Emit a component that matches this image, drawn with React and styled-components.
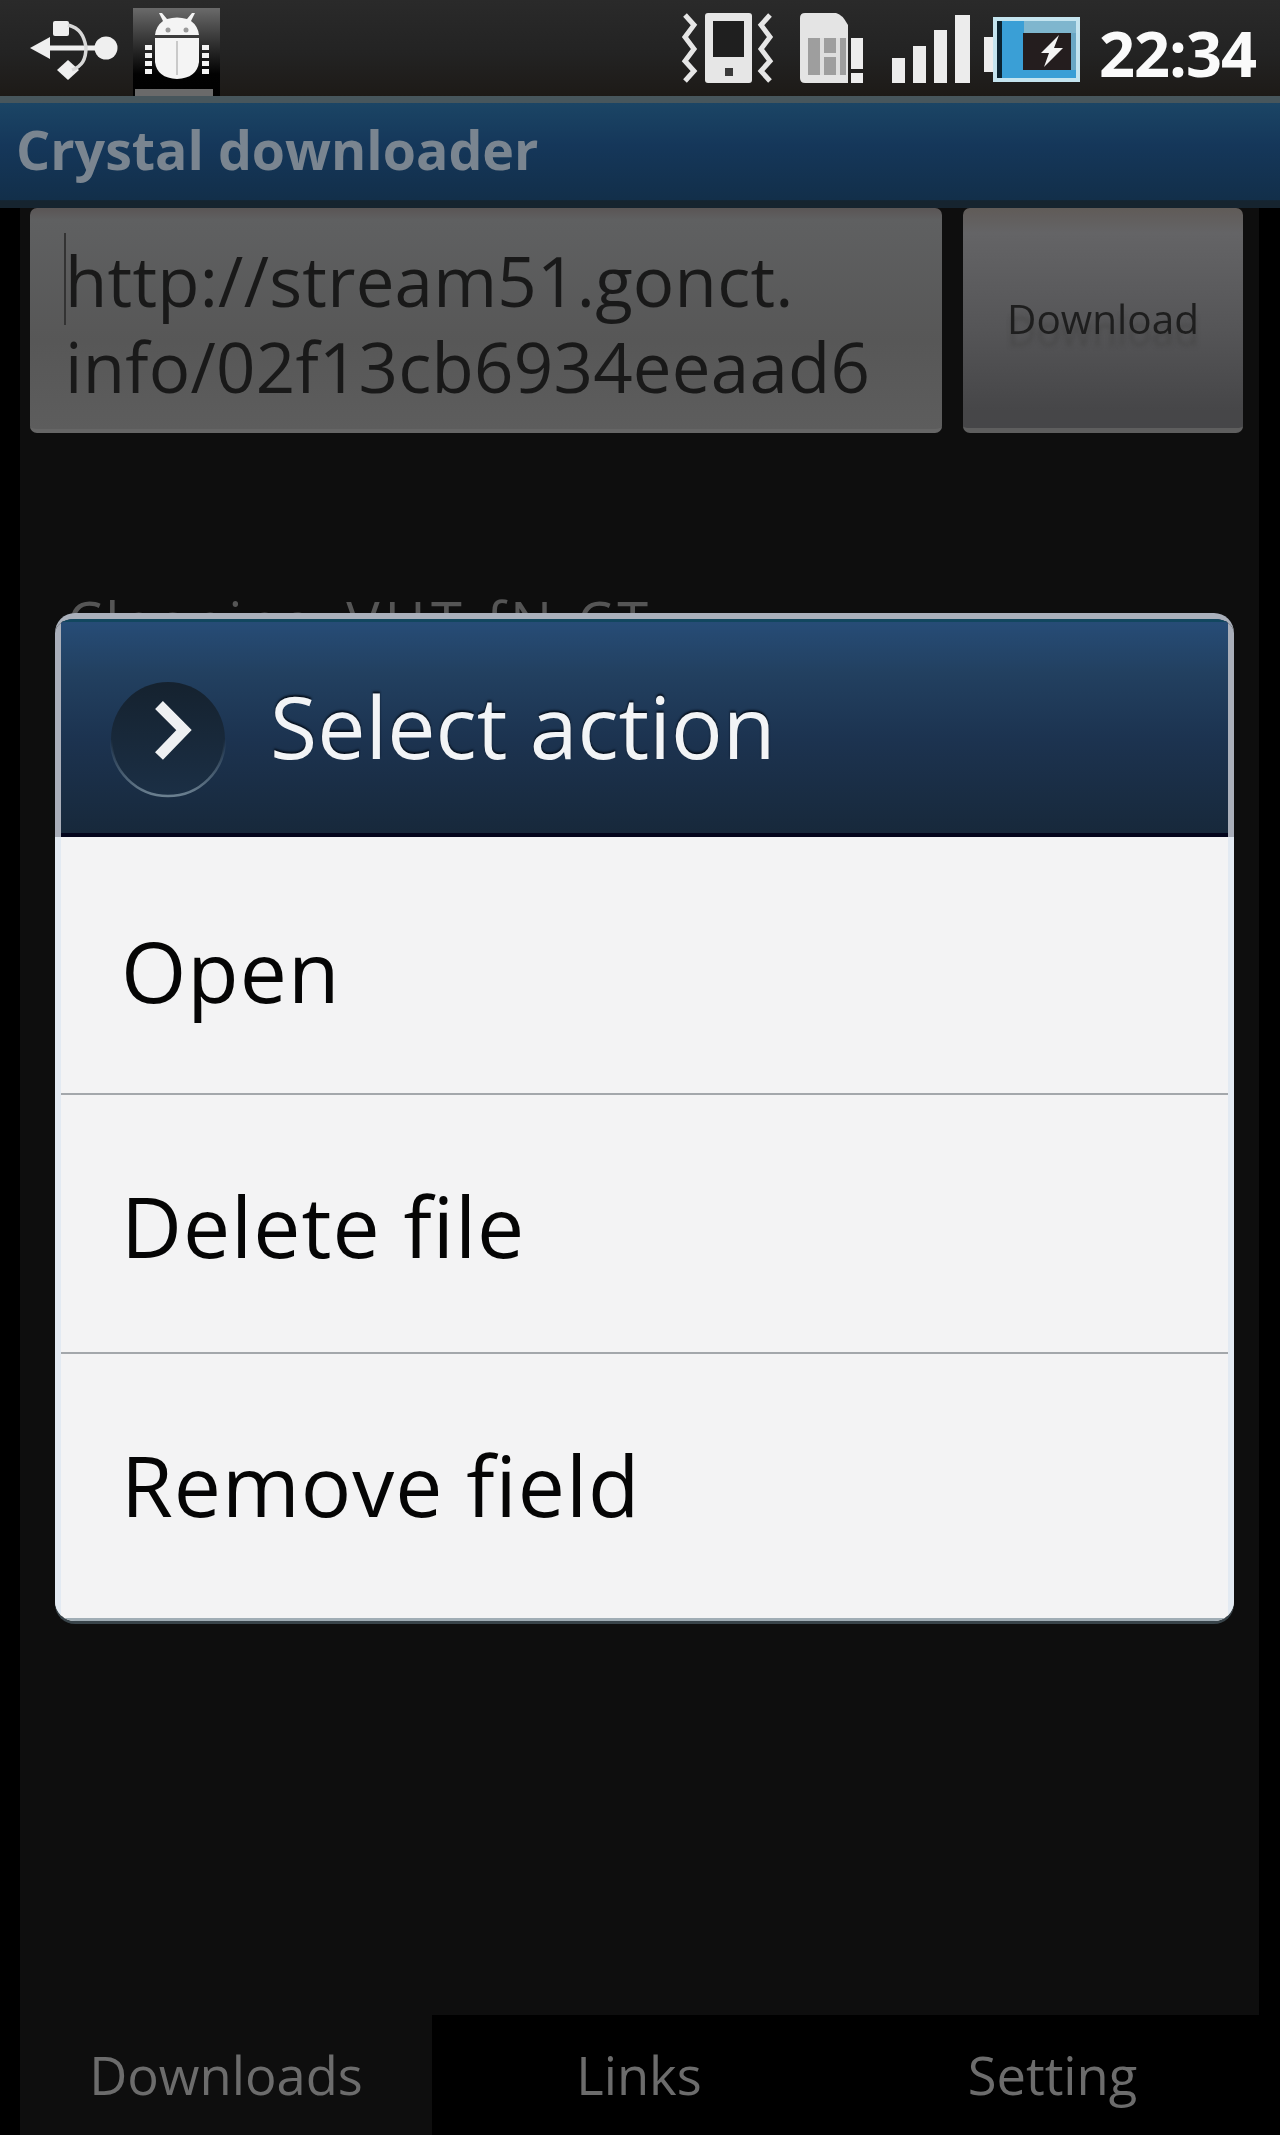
import React from "react";
import styled, { createGlobalStyle } from "styled-components";

const Global = createGlobalStyle`
  html, body { margin: 0; padding: 0; background: #000; }
  #root { width: 1280px; height: 2135px; overflow: hidden; }
`;

const Screen = styled.div`
  position: relative;
  width: 1280px;
  height: 2135px;
  display: flex;
  flex-direction: column;
  background: #000;
  overflow: hidden;
  font-family: "Open Sans", "Noto Sans", sans-serif;
  filter: blur(0.6px);
`;

const StatusBar = styled.div`
  height: 96px;
  flex: none;
  display: flex;
  align-items: flex-start;
  box-sizing: border-box;
  padding: 0 23px 0 30px;
  background: linear-gradient(#2a2a2a, #232323 55%, #1d1a17);
`;

const StatusLeft = styled.div`
  display: flex;
  align-items: flex-start;
`;

const StatusRight = styled.div`
  margin-left: auto;
  display: flex;
  align-items: flex-start;
`;

const Icon = styled.svg`
  display: block;
  flex: none;
  margin-left: ${(p) => p.$gap || 0}px;
  margin-top: ${(p) => p.$top || 0}px;
`;

const Clock = styled.div`
  margin: 11px 3px 0 19px;
  width: 155px;
  font-size: 63px;
  line-height: 84px;
  font-weight: 700;
  letter-spacing: -1px;
  color: #fafafa;
  white-space: nowrap;
`;

const TitleBar = styled.div`
  height: 112px;
  flex: none;
  box-sizing: border-box;
  padding: 0 0 12px 16px;
  display: flex;
  align-items: center;
  border-top: 7px solid #47565c;
  background: linear-gradient(#1b4565, #15375a 40%, #122f4a 92%, #16242f 93%);
  font-size: 53.7px;
  font-weight: 700;
  color: #7a8590;
`;

const Main = styled.div`
  flex: 1;
  margin: 0 21px 0 20px;
  padding: 0 16px 0 10px;
  display: flex;
  flex-direction: column;
  background: #0e0e0e;
`;

const FormRow = styled.div`
  display: flex;
  gap: 21px;
`;

const UrlField = styled.div`
  position: relative;
  width: 912px;
  height: 225px;
  flex: none;
  box-sizing: border-box;
  padding: 29px 0 0 35px;
  border-radius: 7px;
  background: linear-gradient(#5a5555 0, #5f6061 12px, #575757 60%, #5d5d5d);
  border-bottom: 4px solid #666;
  font-size: 69px;
  line-height: 86px;
  letter-spacing: 0.25px;
  color: #191919;
  white-space: nowrap;
`;

const Caret = styled.span`
  position: absolute;
  left: 34px;
  top: 25px;
  width: 2px;
  height: 92px;
  background: #333;
`;

const DownloadButton = styled.div`
  flex: 1;
  height: 225px;
  box-sizing: border-box;
  display: flex;
  align-items: center;
  justify-content: center;
  border-radius: 7px;
  border-bottom: 5px solid #5e5e5e;
  background: linear-gradient(#605b58 0, #646466 25px, #555557 55%, #464648 92%);
  font-size: 40.5px;
  color: #1e1e1e;
  text-shadow: 0 12px 4px rgba(70, 70, 70, 0.7);
`;

const GhostRow = styled.div`
  margin: 151px 0 0 37px;
  display: flex;
  gap: 30px;
  font-size: 56px;
  line-height: 74px;
  letter-spacing: 3px;
  color: #555;
`;

const GhostTail = styled.span`
  letter-spacing: 5px;
`;

const Tabs = styled.div`
  height: 120px;
  flex: none;
  display: grid;
  grid-template-columns: 412px 414px 413px;
  padding: 0 21px 0 20px;
`;

const Tab = styled.div`
  display: flex;
  align-items: flex-start;
  justify-content: center;
  padding-top: 24px;
  background: ${(p) => (p.$active ? "#0e0e0e" : "#000")};
  font-size: 52.5px;
  line-height: 72px;
  color: #6c6c6c;
`;

const Dialog = styled.div`
  position: absolute;
  left: 55px;
  top: 613px;
  width: 1179px;
  height: 1008px;
  box-sizing: border-box;
  display: flex;
  flex-direction: column;
  overflow: hidden;
  border-radius: 20px;
  border-top: 6px solid #aab0bb;
  box-shadow: 0 3px 0 #39444a;
`;

const DialogHeader = styled.div`
  height: 218px;
  flex: none;
  box-sizing: border-box;
  display: flex;
  align-items: center;
  gap: 42px;
  padding: 0 0 6px 47px;
  border: 0 solid #a9aeb9;
  border-width: 0 6px;
  background: linear-gradient(#03051c, #03051c) bottom / 100% 4px no-repeat,
    linear-gradient(#12475f, #12475f) top / 100% 3px no-repeat,
    linear-gradient(#274d78, #224060 25%, #1c3350 55%, #17283a);
  font-size: 86px;
  color: #f2f4f6;
  text-shadow: 0 -2px 2px #06101d;
`;

const DialogBody = styled.div`
  flex: 1;
  display: flex;
  flex-direction: column;
  border: 0 solid #e3eaf2;
  border-width: 0 6px;
  border-bottom: 5px solid #a0adb5;
  background: #f3f3f4;
`;

const DialogRow = styled.div`
  height: ${(p) => p.$height}px;
  flex: none;
  display: flex;
  align-items: center;
  box-sizing: border-box;
  padding: ${(p) => p.$top}px 0 4px 60px;
  font-size: 84px;
  letter-spacing: 1px;
  color: #050505;
  & + & {
    border-top: 2px solid #a3a7ab;
  }
`;

const Usb = () => (
  <Icon width="88" height="60" viewBox="0 0 88 60" $top={20}>
    <g fill="#efefef">
      <rect x="12" y="25.5" width="60" height="5" />
      <polygon points="0,28 20,17 20,39" />
      <circle cx="76" cy="28" r="11.5" />
      <rect x="23" y="1" width="16" height="15" rx="2" />
      <polygon points="38,40 49,50 38,60 27,50" />
    </g>
    <path d="M38 5 C50 8 54 16 56 27 C56 40 52 46 42 50" fill="none" stroke="#d8d8d8" strokeWidth="3.5" />
  </Icon>
);

const AndroidTile = () => (
  <Icon width="87" height="88" viewBox="0 0 87 88" $gap={15} $top={8}>
    <defs>
      <linearGradient id="tile" x1="0" y1="0" x2="0" y2="1">
        <stop offset="0" stopColor="#6a6a6a" />
        <stop offset="0.45" stopColor="#2a2a2a" />
        <stop offset="0.75" stopColor="#020202" />
        <stop offset="1" stopColor="#000" />
      </linearGradient>
    </defs>
    <rect width="87" height="88" fill="url(#tile)" />
    <rect x="2" y="81" width="78" height="7" fill="#6a6a6a" />
    <g fill="#f4f4f4">
      <path d="M30 13 L26 5 L29 5 L34 11 Q44 8 54 11 L59 5 L62 5 L58 13 Q65 18 66 27 L22 27 Q23 18 30 13 Z" />
      <path d="M22 30 L66 30 L66 54 Q64 70 44 71 Q24 70 22 54 Z" />
      <rect x="12" y="37" width="7" height="5" />
      <rect x="12" y="45" width="7" height="5" />
      <rect x="12" y="53" width="7" height="5" />
      <rect x="12" y="61" width="7" height="5" />
      <rect x="69" y="37" width="7" height="5" />
      <rect x="69" y="45" width="7" height="5" />
      <rect x="69" y="53" width="7" height="5" />
      <rect x="69" y="61" width="7" height="5" />
    </g>
    <circle cx="35" cy="22" r="2.5" fill="#9a9a9a" />
    <circle cx="53" cy="22" r="2.5" fill="#9a9a9a" />
    <rect x="43" y="33" width="2" height="34" fill="#c9c9c9" />
  </Icon>
);

const Vibrate = () => (
  <Icon width="95" height="70" viewBox="0 0 95 70" $top={13}>
    <rect x="25" y="0" width="47" height="70" rx="3" fill="#e6e6e6" />
    <rect x="33" y="8" width="31" height="36" fill="#1f1f1f" />
    <rect x="45" y="55" width="8" height="8" fill="#3a3a3a" />
    <g fill="none" stroke="#e6e6e6" strokeWidth="5">
      <polyline points="5,2 14,12 5,24 14,36 5,48 14,58 5,68" />
      <polyline points="90,2 81,12 90,24 81,36 90,48 81,58 90,68" />
    </g>
  </Icon>
);

const Sim = () => (
  <Icon width="63" height="70" viewBox="0 0 63 70" $gap={25} $top={13}>
    <path d="M5 0 L36 0 Q42 1 48 12 L48 70 L5 70 Q0 70 0 65 L0 5 Q0 0 5 0 Z" fill="#e4e4e4" />
    <rect x="8" y="25" width="38" height="37" fill="#9e9e9e" />
    <g fill="#dedede">
      <rect x="20" y="25" width="4" height="37" />
      <rect x="36" y="25" width="4" height="37" />
      <rect x="24" y="40" width="12" height="4" />
    </g>
    <rect x="51" y="25" width="12" height="31" fill="#ededed" />
    <rect x="51" y="60" width="12" height="10" fill="#ededed" />
  </Icon>
);

const Signal = () => (
  <Icon width="78" height="70" viewBox="0 0 78 70" $gap={29} $top={13}>
    <g fill="#ececec">
      <rect x="0" y="45" width="13" height="25" />
      <rect x="21" y="33" width="13" height="37" />
      <rect x="42" y="17" width="13" height="53" />
      <rect x="63" y="2" width="15" height="68" />
    </g>
  </Icon>
);

const Battery = () => (
  <Icon width="96" height="65" viewBox="0 0 96 65" $gap={14} $top={17}>
    <rect x="0" y="20" width="9" height="35" fill="#ececec" />
    <rect x="11" y="2" width="83" height="61" fill="#0b2330" stroke="#c4e4ef" strokeWidth="4" />
    <rect x="18" y="4" width="74" height="57" fill="#3a9fd6" />
    <rect x="40" y="4" width="52" height="12" fill="#7fb6ce" />
    <rect x="87" y="16" width="5" height="37" fill="#6aa7c4" />
    <rect x="39" y="16" width="48" height="37" fill="#241d1e" />
    <polygon points="75,18 57,36 65,36 60,50 79,31 70,31" fill="#f4f4f4" />
  </Icon>
);

const HeaderBadge = () => (
  <Icon width="120" height="120" viewBox="0 0 120 120" $top={28}>
    <defs>
      <linearGradient id="badge" x1="0" y1="0" x2="0" y2="1">
        <stop offset="0" stopColor="#15222f" />
        <stop offset="1" stopColor="#1b2f45" />
      </linearGradient>
      <linearGradient id="ring" x1="0" y1="0" x2="0" y2="1">
        <stop offset="0.5" stopColor="#5d7385" stopOpacity="0" />
        <stop offset="1" stopColor="#6b8090" />
      </linearGradient>
    </defs>
    <circle cx="60" cy="60" r="57" fill="url(#badge)" stroke="url(#ring)" strokeWidth="2.5" />
    <polyline points="51,26 76,51 51,77" fill="none" stroke="#eef0f2" strokeWidth="11" />
  </Icon>
);

export default function App() {
  return (
    <Screen>
      <Global />
      <StatusBar>
        <StatusLeft>
          <Usb />
          <AndroidTile />
        </StatusLeft>
        <StatusRight>
          <Vibrate />
          <Sim />
          <Signal />
          <Battery />
          <Clock>22:34</Clock>
        </StatusRight>
      </StatusBar>
      <TitleBar>Crystal downloader</TitleBar>
      <Main>
        <FormRow>
          <UrlField>
            <Caret />
            http://stream51.gonct.
            <br />
            info/02f13cb6934eeaad6
          </UrlField>
          <DownloadButton>Download</DownloadButton>
        </FormRow>
        <GhostRow>
          <span>Cleaning</span>
          <GhostTail>VHT fN.CT</GhostTail>
        </GhostRow>
      </Main>
      <Tabs>
        <Tab $active>Downloads</Tab>
        <Tab>Links</Tab>
        <Tab>Setting</Tab>
      </Tabs>
      <Dialog>
        <DialogHeader>
          <HeaderBadge />
          <span>Select action</span>
        </DialogHeader>
        <DialogBody>
          <DialogRow $height={256} $top={14}>Open</DialogRow>
          <DialogRow $height={259} $top={8}>Delete file</DialogRow>
          <DialogRow $height={266} $top={0}>Remove field</DialogRow>
        </DialogBody>
      </Dialog>
    </Screen>
  );
}
